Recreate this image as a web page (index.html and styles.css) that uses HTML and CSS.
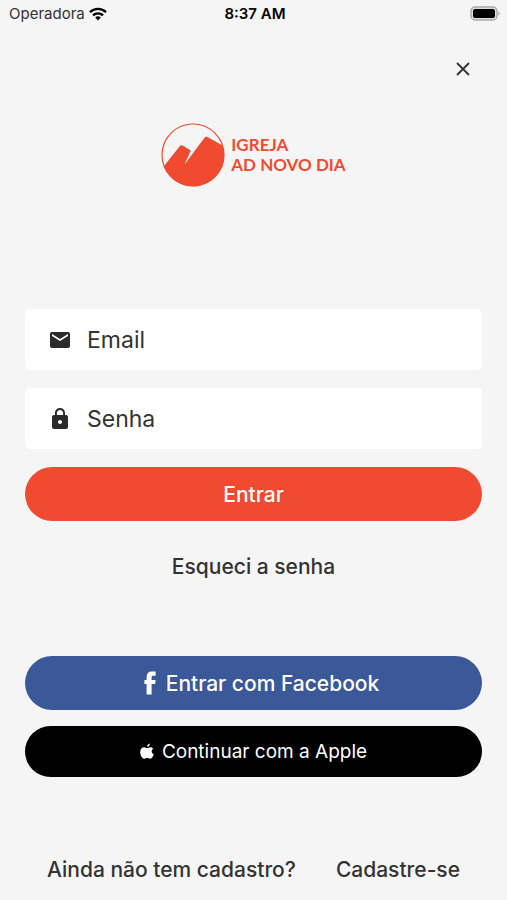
FILE: index.html
```html
<!DOCTYPE html>
<html lang="pt-BR">
  <head>
    <meta charset="UTF-8" />
    <meta name="viewport" content="width=device-width, initial-scale=1.0" />
    <title>Igreja AD Novo Dia</title>
    <link rel="stylesheet" href="styles.css">
  </head>
  <body>
    <div class="statusBar">
      <div class="carrier">
        <span>Operadora</span>
        <svg width="18" height="14" viewBox="0 0 18 14" fill="none" stroke="#000" stroke-width="2.4">
          <path d="M1 5.2a11.4 11.4 0 0 1 16 0" />
          <path d="M4 8.4a7.1 7.1 0 0 1 10 0" />
          <path d="M9 13.4L6.2 10.6a4 4 0 0 1 5.6 0z" fill="#000" stroke="none" />
        </svg>
      </div>
      <span class="clock">8:37 AM</span>
      <svg class="battery" width="31" height="15" viewBox="0 0 31 15">
        <rect x="1" y="1" width="26" height="13" rx="4" fill="#ddd" stroke="#aaa" stroke-width="1.5" />
        <rect x="3" y="3" width="22" height="9" rx="2" />
        <path d="M28.5 5.2a2.6 2.6 0 0 1 0 4.6z" fill="#aaa" />
      </svg>
    </div>

    <div class="top">
      <button class="close" type="button" aria-label="Fechar">
        <svg width="14" height="14" viewBox="0 0 14 14" stroke="#333" stroke-width="1.8">
          <path d="M1 1l12 12M13 1L1 13" />
        </svg>
      </button>
    </div>

    <div class="logo">
      <svg width="64" height="64" viewBox="0 0 64 64">
        <circle cx="32" cy="32" r="31" fill="none" stroke="#f04a30" stroke-width="1.2" />
        <path d="M3 43L18.500 23.500Q20 21.500 22 22.800L29.800 27.600L23.500 41.500L43.300 15Q44.700 13 46.500 14L61.600 22.400A31.300 31.300 0 0 1 32 63.300A31.300 31.300 0 0 1 3 43z" fill="#f04a30" />
      </svg>
      <div class="logoText">IGREJA<br />AD NOVO DIA</div>
    </div>

    <form class="form">
      <div class="field">
        <label for="email" aria-label="Email">
          <svg width="24" height="24" viewBox="0 0 24 24" fill="#2b2b2b">
            <path d="M20 4H4c-1.100 0-2 .9-2 2v12c0 1.100.9 2 2 2h16c1.100 0 2-.9 2-2V6c0-1.100-.9-2-2-2zm0 4l-8 5-8-5V6l8 5 8-5v2z" />
          </svg>
        </label>
        <input type="email" id="email" placeholder="Email" />
      </div>
      <div class="field">
        <label for="password" aria-label="Senha">
          <svg width="24" height="24" viewBox="0 0 24 24" fill="#2b2b2b">
            <path d="M18 8h-1V6c0-2.760-2.240-5-5-5S7 3.240 7 6v2H6c-1.100 0-2 .9-2 2v10c0 1.100.9 2 2 2h12c1.100 0 2-.9 2-2V10c0-1.100-.9-2-2-2zm-6 9c-1.100 0-2-.9-2-2s.9-2 2-2 2 .9 2 2-.9 2-2 2zm3.100-9H8.900V6c0-1.710 1.390-3.100 3.100-3.100s3.100 1.390 3.100 3.100v2z" />
          </svg>
        </label>
        <input type="password" id="password" placeholder="Senha" />
      </div>
      <button class="btn" type="submit">Entrar</button>
    </form>

    <a class="forgot" href="#">Esqueci a senha</a>

    <div class="social">
      <button class="btn facebook" type="button">
        <svg width="12" height="24" viewBox="0 0 12 24" fill="#fff">
          <path d="M2.600 23.500V13H.4V9h2.200V6.200C2.600 2.400 4.300.500 7.800.5h3.800v4.200H9.300C8 4.700 7.600 5.200 7.600 6.500V9h4l-.5 4H7.600v10.500z" />
        </svg>
        Entrar com Facebook
      </button>
      <button class="btn apple" type="button">
        <svg width="14" height="17" viewBox="0 0 14 17" fill="#fff">
          <path d="M9.900.4c.1 1.300-.9 3.100-2.800 3.300C6.900 2.200 8.200.6 9.900.4zM13.200 5.800c-2.200 1.300-1.900 4.500.6 5.500-.6 1.900-2 4.500-3.600 4.500-1.100 0-1.500-.7-2.800-.7s-1.800.7-2.800.7C2.400 15.800.2 12.400.2 9.200c0-3 1.800-4.900 3.900-4.900 1.300 0 2.200.8 3.200.8s1.800-.9 3.400-.9c1 0 2 .6 2.500 1.600z" />
        </svg>
        Continuar com a Apple
      </button>
    </div>

    <div class="footer">
      <span>Ainda não tem cadastro?</span>
      <a href="#">Cadastre-se</a>
    </div>
  </body>
</html>
```
FILE: styles.css
```css
* {
  box-sizing: border-box;
}

body {
  margin: 0;
  min-height: 100vh;
  display: flex;
  flex-direction: column;
  background: #f5f5f5;
  color: #333;
  font-family: Inter, "Liberation Sans", sans-serif;
}

a {
  color: inherit;
  text-decoration: none;
}

button {
  border: none;
  font-family: inherit;
  cursor: pointer;
}

.statusBar {
  display: grid;
  grid-template-columns: 1fr auto 1fr;
  align-items: center;
  height: 27px;
  padding: 0 6px 0 9px;
  font-size: 15px;
}

.carrier {
  display: flex;
  align-items: center;
  gap: 4px;
}

.clock {
  color: #000;
  font-weight: 600;
}

.battery {
  justify-self: end;
}

.top {
  display: flex;
  justify-content: flex-end;
  padding: 25px 27px 0;
}

.close {
  display: flex;
  padding: 10px;
  background: none;
}

.logo {
  display: flex;
  justify-content: center;
  align-items: center;
  gap: 6px;
  margin-top: 37px;
  color: #f04a30;
}

.logoText {
  font-family: Lato, sans-serif;
  font-size: 17px;
  font-weight: 700;
  line-height: 20px;
}

.form {
  display: flex;
  flex-direction: column;
  gap: 18px;
  margin-top: 122px;
  padding: 0 25px;
}

.field {
  display: flex;
  align-items: center;
  gap: 15px;
  height: 61px;
  padding: 0 23px;
  background: #fff;
  border-radius: 5px;
}

.field label {
  display: flex;
}

.field input {
  flex: 1;
  min-width: 0;
  padding: 0;
  border: none;
  outline: none;
  background: none;
  color: #333;
  font-family: inherit;
  font-size: 23px;
}

.field input::placeholder {
  color: #333;
  opacity: 1;
}

.btn {
  display: flex;
  justify-content: center;
  align-items: center;
  gap: 10px;
  height: 54px;
  border-radius: 27px;
  background: #f04a30;
  color: #fff;
  font-size: 21px;
  font-weight: 500;
}

.forgot {
  align-self: center;
  margin-top: 33px;
  font-size: 21px;
  font-weight: 500;
  line-height: 26px;
}

.social {
  display: flex;
  flex-direction: column;
  gap: 16px;
  margin-top: 76px;
  padding: 0 25px;
}

.facebook {
  padding-left: 22px;
  background: #3b5998;
}

.apple {
  gap: 8px;
  height: 51px;
  background: #000;
  font-size: 19px;
  font-weight: 400;
}

.footer {
  display: flex;
  justify-content: space-between;
  margin-top: auto;
  padding: 0 47px 17px;
  font-size: 21px;
  font-weight: 500;
  line-height: 26px;
}
```
